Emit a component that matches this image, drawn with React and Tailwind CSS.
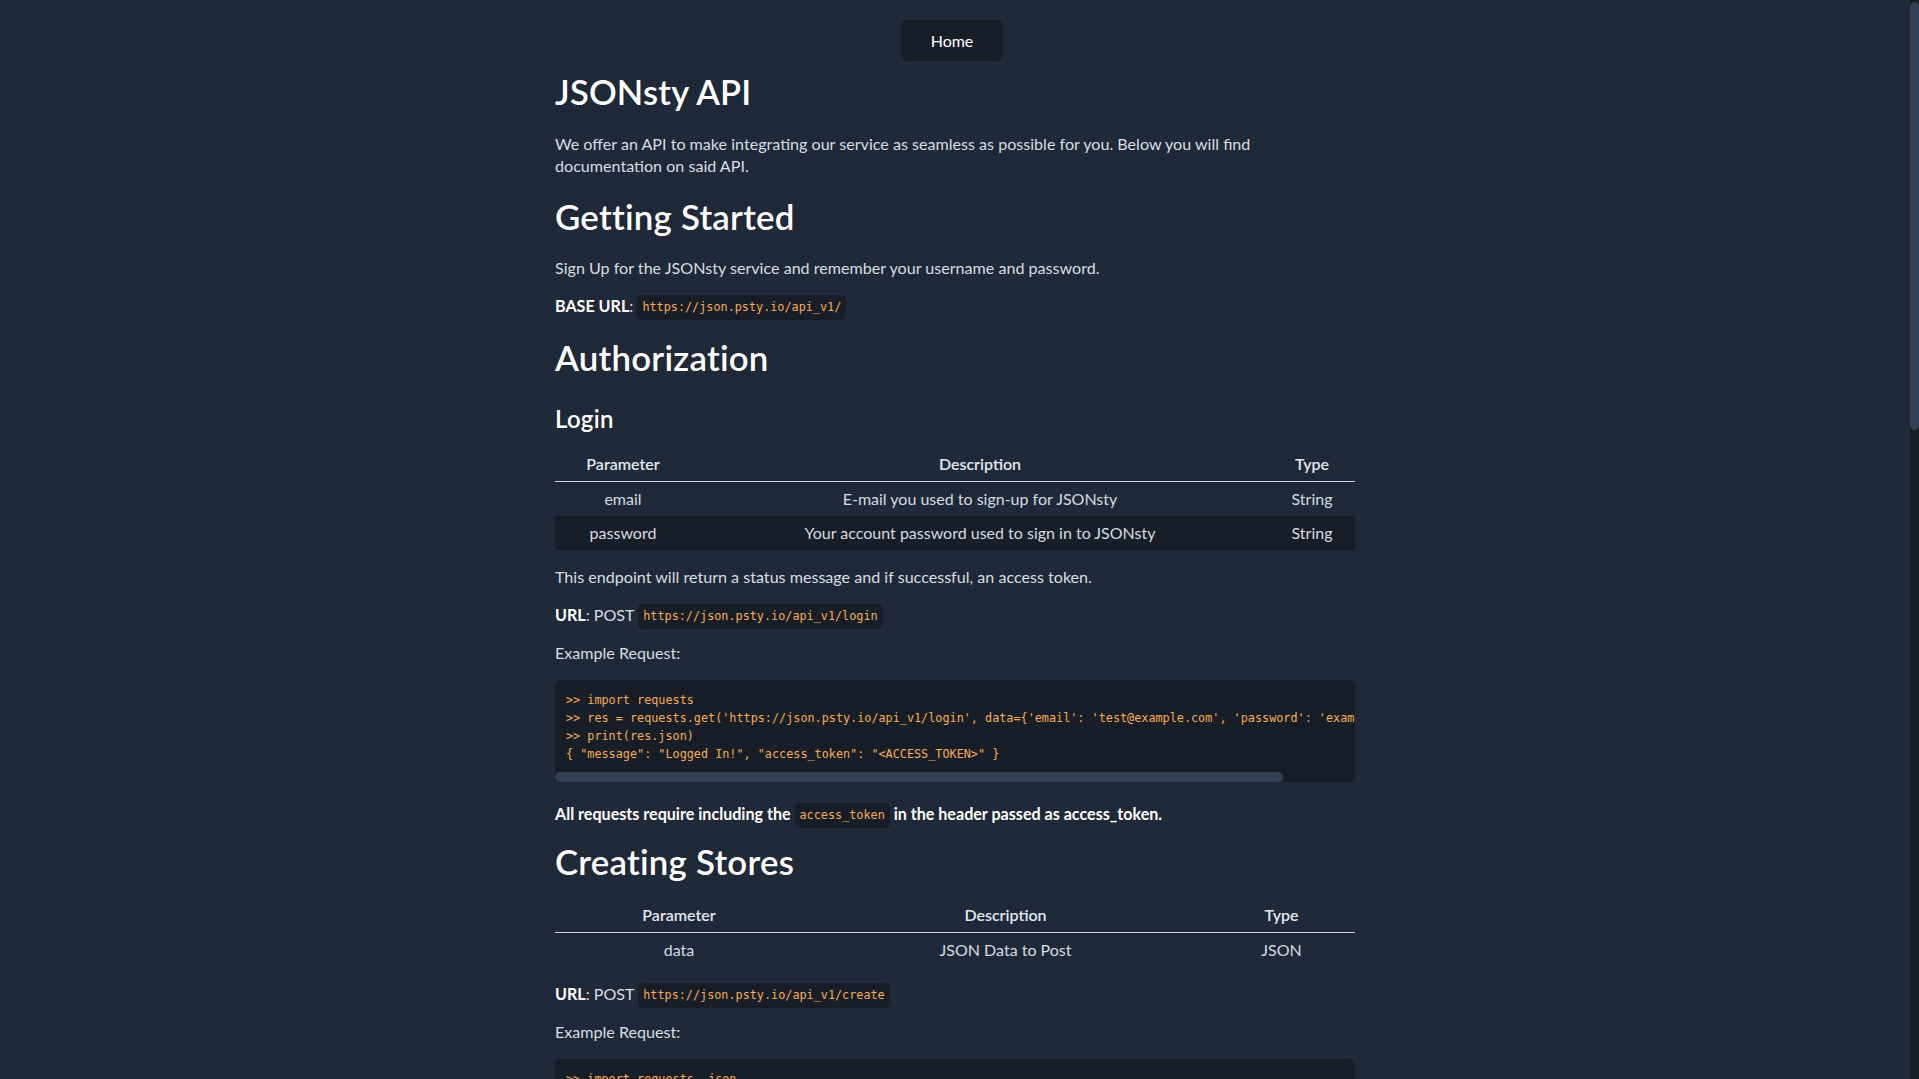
import React from "react";

const MONO = "font-['DejaVu_Sans_Mono','Liberation_Mono',monospace]";

const Code = ({ children }) => (
  <code
    className={`inline-block align-middle h-[25px] leading-[25px] px-[5px] -my-[4px] rounded-[5px] bg-[#181e27] text-[#f6ad55] ${MONO} text-[11.8px] font-normal`}
  >
    {children}
  </code>
);

const CodeBlock = ({ lines, thumb = 728, className = "" }) => (
  <div className={`rounded-[6px] bg-[#181e27] overflow-hidden ${className}`}>
    <pre className={`overflow-hidden pt-[11px] pb-[9px] px-[11px] ${MONO} text-[11.8px] leading-[18px] text-[#f6ad55]`}>
      {lines.map((l, i) => (
        <div key={i}>{l}</div>
      ))}
    </pre>
    <div className="h-[10px]">
      <div className="h-full rounded-full bg-[#334155]" style={{ width: thumb }} />
    </div>
  </div>
);

const ParamTable = ({ widths, rows, className = "" }) => (
  <table className={`w-full table-fixed border-separate border-spacing-0 text-center ${className}`}>
    <colgroup>
      <col style={{ width: widths[0] }} />
      <col />
      <col style={{ width: widths[2] }} />
    </colgroup>
    <thead>
      <tr>
        {["Parameter", "Description", "Type"].map((h) => (
          <th key={h} className="pt-[1px] pb-[1px] leading-[32px] font-semibold text-[#e2e8f0] border-b border-[#d1d5db]">
            {h}
          </th>
        ))}
      </tr>
    </thead>
    <tbody>
      {rows.map((r, i) => (
        <tr key={i} className={i % 2 === 1 ? "bg-[#181e27]" : ""}>
          {r.map((c, j) => (
            <td key={j} className="pt-[1px] pb-[1px] leading-[32px] text-[#d6dbe2]">
              {c}
            </td>
          ))}
        </tr>
      ))}
    </tbody>
  </table>
);

const H2 = ({ children, className = "" }) => (
  <h2 className={`text-[34.8px] leading-[40px] tracking-[0.25px] font-semibold text-white ${className}`}>{children}</h2>
);

const P = ({ children, className = "" }) => (
  <p className={`text-[16.1px] leading-[22px] text-[#d9dee4] ${className}`}>{children}</p>
);

export default function App() {
  return (
    <div className="flex h-screen overflow-hidden bg-[#1f2937] font-[Lato,sans-serif]">
      <div className="flex-1 overflow-hidden">
        <nav className="flex justify-center pt-[20px] pr-[6px]">
          <button className="w-[102px] h-[41px] rounded-[6px] bg-[#181e27] text-white text-[16px]">Home</button>
        </nav>
        <main className="w-[800px] mx-auto pb-[60px]">
          <h1 className="mt-[11px] text-[34.5px] leading-[40px] tracking-[0.2px] font-semibold text-white">JSONsty API</h1>
          <P className="mt-[21px]">
            We offer an API to make integrating our service as seamless as possible for you. Below you will find
            documentation on said API.
          </P>

          <H2 className="mt-[20px]">Getting Started</H2>
          <P className="mt-[20px]">Sign Up for the JSONsty service and remember your username and password.</P>
          <P className="mt-[16px]">
            <b className="font-bold text-white">BASE URL</b>: <Code>https://json.psty.io/api_v1/</Code>
          </P>

          <H2 className="mt-[21px]">Authorization</H2>
          <h3 className="mt-[27px] text-[24px] leading-[28px] tracking-[0.3px] font-semibold text-white">Login</h3>
          <ParamTable
            className="mt-[14px]"
            widths={[136, 0, 86]}
            rows={[
              ["email", "E-mail you used to sign-up for JSONsty", "String"],
              ["password", "Your account password used to sign in to JSONsty", "String"],
            ]}
          />
          <P className="mt-[16px]">This endpoint will return a status message and if successful, an access token.</P>
          <P className="mt-[16px]">
            <b className="font-bold text-white">URL</b>: POST <Code>https://json.psty.io/api_v1/login</Code>
          </P>
          <P className="mt-[16px]">Example Request:</P>
          <CodeBlock
            className="mt-[16px]"
            thumb={728}
            lines={[
              ">> import requests",
              ">> res = requests.get('https://json.psty.io/api_v1/login', data={'email': 'test@example.com', 'password': 'examplepass'})",
              ">> print(res.json)",
              '{ "message": "Logged In!", "access_token": "<ACCESS_TOKEN>" }',
            ]}
          />
          <P className="mt-[21px] font-bold text-white">
            All requests require including the <Code>access_token</Code> in the header passed as access_token.
          </P>

          <H2 className="mt-[17px]">Creating Stores</H2>
          <ParamTable className="mt-[16px]" widths={[248, 0, 147]} rows={[["data", "JSON Data to Post", "JSON"]]} />
          <P className="mt-[16px]">
            <b className="font-bold text-white">URL</b>: POST <Code>https://json.psty.io/api_v1/create</Code>
          </P>
          <P className="mt-[16px]">Example Request:</P>
          <CodeBlock
            className="mt-[16px]"
            thumb={640}
            lines={[
              ">> import requests, json",
              ">> res = requests.post('https://json.psty.io/api_v1/create', headers={'access_token': '<ACCESS_TOKEN>'}, data=json.dumps({'name': 'store'}))",
              ">> print(res.json)",
              '{ "message": "Store Created!", "id": "<STORE_ID>" }',
            ]}
          />

          <H2 className="mt-[18px]">Retrieving Stores</H2>
          <ParamTable className="mt-[16px]" widths={[248, 0, 147]} rows={[["id", "ID of the store to retrieve", "String"]]} />
          <P className="mt-[16px]">
            <b className="font-bold text-white">URL</b>: GET <Code>https://json.psty.io/api_v1/stores/&lt;STORE_ID&gt;</Code>
          </P>
          <P className="mt-[16px]">Example Request:</P>
          <CodeBlock
            className="mt-[16px]"
            thumb={700}
            lines={[
              ">> import requests",
              ">> res = requests.get('https://json.psty.io/api_v1/stores/<STORE_ID>', headers={'access_token': '<ACCESS_TOKEN>'})",
              ">> print(res.json)",
              '{ "message": "Store Retrieved!", "data": { "name": "store" } }',
            ]}
          />
        </main>
      </div>
      <div className="w-[9px] shrink-0 bg-[#181e27] pt-[2px]">
        <div className="h-[428px] rounded-full bg-[#334155]" />
      </div>
    </div>
  );
}
